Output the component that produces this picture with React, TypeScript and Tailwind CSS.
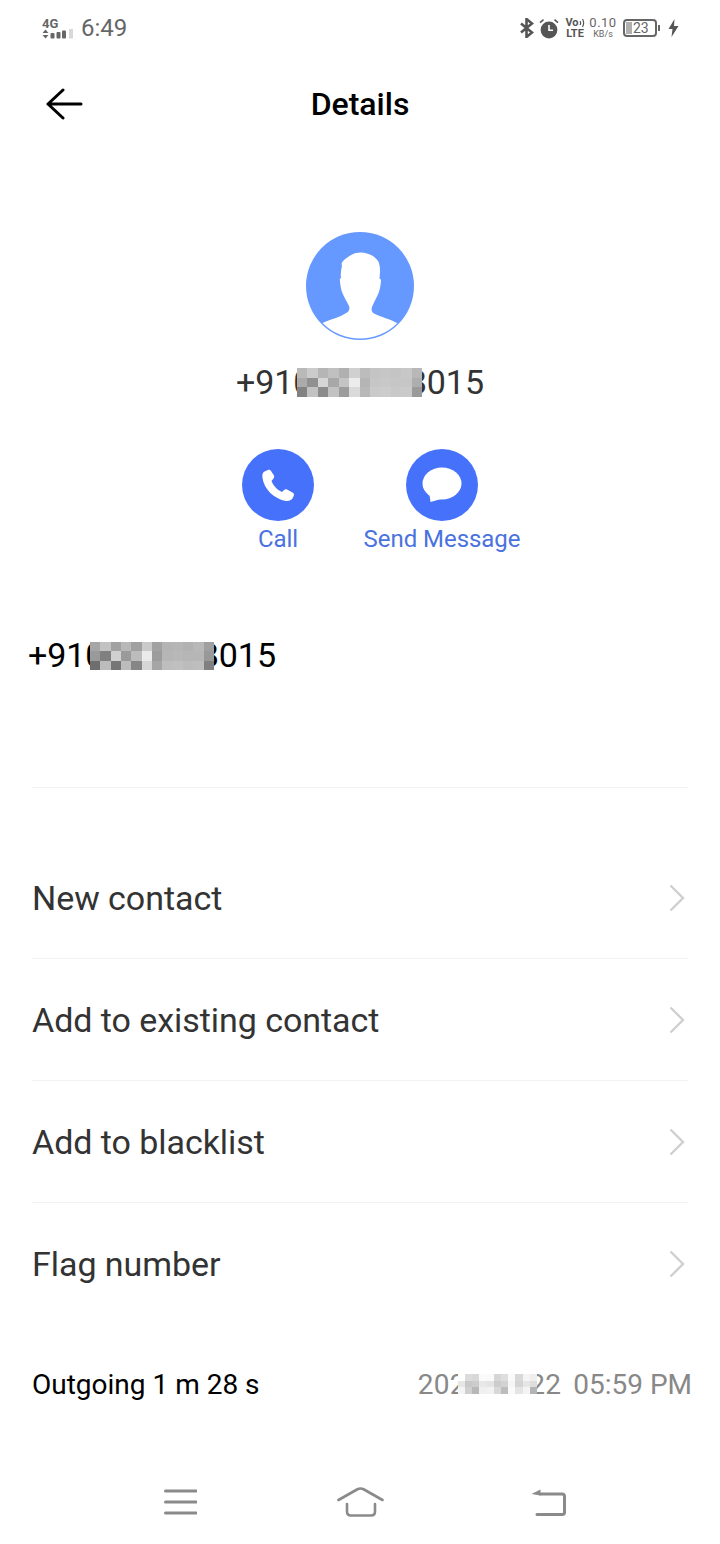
import React from 'react';

const firstMosaic = [
  ['#b9b9b9', '#cbcbcb', '#b5b5b5', '#c0c0c0', '#b0b0b0', '#d0d0d0', '#bcbcbc', '#c4c4c4', '#c6c6c6', '#c4c4c4', '#c8c8c8', '#b8b8b8'],
  ['#ababab', '#909090', '#d6d6d6', '#a8a8a8', '#c4c4c4', '#ececec', '#b5b5b5', '#c6c6c6', '#c8c8c8', '#c6c6c6', '#c6c6c6', '#aeaeae'],
  ['#828282', '#c2c2c2', '#8c8c8c', '#c2c2c2', '#9c9c9c', '#dadada', '#b8b8b8', '#cacaca', '#cccccc', '#c8c8c8', '#cacaca', '#9a9a9a'],
];

const secondMosaic = [
  ['#a6a6a6', '#c2c2c2', '#a2a2a2', '#b8b8b8', '#a0a0a0', '#cacaca', '#a2a2a2', '#b4b4b4', '#b6b6b6', '#b2b2b2', '#b8b8b8', '#a0a0a0'],
  ['#9a9a9a', '#808080', '#d0d0d0', '#9a9a9a', '#bcbcbc', '#eaeaea', '#9c9c9c', '#b6b6b6', '#b8b8b8', '#b6b6b6', '#b6b6b6', '#989898'],
  ['#6e6e6e', '#bcbcbc', '#767676', '#bcbcbc', '#868686', '#d6d6d6', '#a6a6a6', '#bebebe', '#c0c0c0', '#bcbcbc', '#bebebe', '#808080'],
];

const dateMosaic = [
  ['#ffffff', '#dcdcdc', '#d8d8d8', '#fafafa', '#fafafa', '#d6d6d6', '#dedede', '#fafafa', '#d8d8d8', '#f4f4f4', '#eeeeee'],
  ['#e6e6e6', '#c8c8c8', '#cccccc', '#e8e8e8', '#e4e4e4', '#cccccc', '#d2d2d2', '#f6f6f6', '#d4d4d4', '#e6e6e6', '#dedede'],
  ['#f4f4f4', '#cfcfcf', '#b8b8b8', '#f0f0f0', '#f2f2f2', '#d8d8d8', '#bcbcbc', '#fafafa', '#e4e4e4', '#f4f4f4', '#b4b4b4'],
];

const Mosaic = ({ rows, className }: { rows: string[][]; className: string }) => (
  <div className={`absolute flex flex-col ${className}`}>
    {rows.map((row, i) => (
      <div key={i} className="flex flex-1">
        {row.map((color, j) => (
          <div key={j} className="flex-1" style={{ backgroundColor: color }} />
        ))}
      </div>
    ))}
  </div>
);

const Chevron = () => (
  <svg width="16" height="28" viewBox="0 0 16 28" fill="none" stroke="#cfcfcf" strokeWidth="2.4">
    <path d="M1.5 1.5L14 14L1.5 26.5" />
  </svg>
);

const MenuRow = ({ label, divider }: { label: string; divider?: boolean }) => (
  <div className={`h-[122px] flex items-center justify-between pr-[3px] ${divider ? 'border-b border-[#f2f2f2]' : ''}`}>
    <span className="text-[34px] tracking-[-0.05px] text-[#333333] leading-none">{label}</span>
    <Chevron />
  </div>
);

const StatusBar = () => (
  <div className="h-[56px] shrink-0 flex items-center justify-between pl-[42px] pr-[41px] text-[#666666]">
    <div className="flex items-center gap-[7px]">
      <div className="flex flex-col w-[32px] h-[22px] relative top-[1px]">
        <span className="text-[13px] font-bold leading-[12px] h-[11px]">4G</span>
        <svg width="32" height="10" viewBox="0 0 32 10" fill="#666666">
          <path d="M0.5 4L3.5 0.5L6.5 4Z" />
          <path d="M0.5 6L6.5 6L3.5 9.5Z" />
          <rect x="8.5" y="4" width="4" height="5.5" rx="1" />
          <rect x="14.5" y="3" width="4" height="6.5" rx="1" />
          <rect x="20" y="1.5" width="4" height="8" rx="1" />
          <rect x="27" y="0" width="4" height="9.5" fill="#d8d8d8" />
        </svg>
      </div>
      <span className="text-[24px] leading-none">6:49</span>
    </div>
    <div className="flex items-center">
      <svg width="14" height="20" viewBox="0 0 14 20" fill="none" stroke="#555555" strokeWidth="2.6">
        <path d="M1 5.5L12 14.5L6.5 19V1L12 5.5L1 14.5" />
      </svg>
      <svg className="ml-[5px]" width="20" height="21" viewBox="0 0 20 21" fill="#555555">
        <circle cx="10" cy="12" r="8.4" />
        <path d="M9.2 7V13H14V11.4H10.8V7Z" fill="#ffffff" />
        <path d="M0.5 4L4 1L5 2.2L1.6 5.2Z" />
        <path d="M19.5 4L16 1L15 2.2L18.4 5.2Z" />
      </svg>
      <div className="ml-[7px] w-[18px] flex flex-col items-center font-bold text-[#555555]">
        <span className="flex items-center h-[11px]">
          <span className="text-[11px] leading-[11px]">Vo</span>
          <svg width="6" height="10" viewBox="0 0 6 10" fill="none" stroke="#555555" strokeWidth="1.2">
            <path d="M1 3C2 4.5 2 5.5 1 7M3.5 1C5.2 4 5.2 6 3.5 9" />
          </svg>
        </span>
        <span className="text-[11px] leading-[11px] h-[11px]">LTE</span>
      </div>
      <div className="ml-[6px] w-[26px] flex flex-col items-center">
        <span className="text-[13px] leading-[12px] tracking-[0.5px]">0.10</span>
        <span className="text-[9px] leading-[11px]">KB/s</span>
      </div>
      <div className="ml-[7px] flex items-center">
        <div className="w-[34px] h-[18px] border-2 border-[#666666] rounded-[4px] flex items-center px-[1px]">
          <div className="w-[6px] h-[12px] bg-[#b0b0b0]" />
          <span className="ml-[1px] text-[14px] leading-none">23</span>
        </div>
        <div className="w-[2px] h-[6px] bg-[#666666] ml-[1px]" />
      </div>
      <svg className="ml-[8px]" width="11" height="18" viewBox="0 0 11 18" fill="#555555">
        <path d="M6.5 0L0.5 10H4.5L3.5 18L10.5 7H6L6.5 0Z" />
      </svg>
    </div>
  </div>
);

const Avatar = () => (
  <svg width="108" height="108" viewBox="0 0 108 108">
    <defs>
      <clipPath id="avatarClip">
        <circle cx="54" cy="54" r="52.6" />
      </clipPath>
    </defs>
    <circle cx="54" cy="54" r="54" fill="#6699ff" />
    <path
      clipPath="url(#avatarClip)"
      fill="#ffffff"
      d="M55 20.5C50 20.5 46 22 42 25C39 27 36.5 29 35.5 31.5C36 33 36 35 35.5 36C35 39 34.5 42 35 46L33.8 47C34 52 35 57 36 60C38 65 41 70 43 74C44 77 43 79 41 80.5C33 86 24 87 15.5 91.5L10 108H98L92 91.5C84 87 75 85 68 81.5C66 80 65 78 66 75C68 70 71 65 73 60C74 56 75 52 75 47.5L73.5 46.5C74 41 74.5 36 73 31C71 25 62 20.5 55 20.5Z"
    />
  </svg>
);

const PhoneIcon = () => (
  <svg width="72" height="72" viewBox="0 0 72 72">
    <circle cx="36" cy="36" r="36" fill="#4672fb" />
    <path
      fill="#ffffff"
      d="M26 21L22.5 22.5C20.5 23.5 20 26 20.5 29C22 40 32 50 44 52C47 52.5 50 51 51 48.5L52 46C52 45 51.5 44 50.5 43.5L45 40.5C44 40 43 40.2 42 41L40 43C35 41 31 36 29.5 32L31.5 29.5C32.3 28.5 32.3 27.5 32 26.5L29 22C28.5 21 27 20.6 26 21Z"
    />
  </svg>
);

const BubbleIcon = () => (
  <svg width="72" height="72" viewBox="0 0 72 72" fill="#ffffff">
    <circle cx="36" cy="36" r="36" fill="#4672fb" />
    <ellipse cx="36" cy="34.5" rx="19.5" ry="16" />
    <path d="M23 42L24.5 53L35 50Z" />
  </svg>
);

const NavBar = () => (
  <div className="flex items-center pl-[164px] mt-[82px]">
    <svg width="33" height="26" viewBox="0 0 33 26" fill="none" stroke="#8a8a8a" strokeWidth="3" strokeLinecap="round">
      <path d="M1.5 2H32M1.5 13H32M1.5 24H32" />
    </svg>
    <svg className="ml-[140px]" width="47" height="30" viewBox="0 0 47 30" fill="none" stroke="#8a8a8a" strokeWidth="2.6" strokeLinecap="round">
      <path d="M1.5 13L20 2.5C22 1.4 25 1.4 27 2.5L45.5 13" />
      <path d="M10 17V24.5C10 27 11.5 28.5 14 28.5H34C36.5 28.5 38 27 38 24.5V17" />
    </svg>
    <svg className="ml-[147px]" width="35" height="28" viewBox="0 0 35 28" fill="none" stroke="#8a8a8a" strokeWidth="3" strokeLinecap="round">
      <path d="M9 6H31C32.5 6 33.5 7 33.5 8.5V24.5C33.5 26 32.5 26.5 31 26.5H6" />
      <path d="M0.5 6L9.5 1.5V7.5Z" fill="#8a8a8a" stroke="none" />
    </svg>
  </div>
);

export default function App() {
  return (
    <div className="w-[720px] h-[1544px] bg-white overflow-hidden flex flex-col font-['Roboto',sans-serif]">
      <StatusBar />

      <div className="h-[96px] shrink-0 grid grid-cols-[1fr_auto_1fr] items-center">
        <div className="pl-[46px]">
          <svg width="37" height="32" viewBox="0 0 37 32" fill="none" stroke="#000000" strokeWidth="3" strokeLinecap="round" strokeLinejoin="round">
            <path d="M2 16H35M17 2L2 16L17 30" />
          </svg>
        </div>
        <span className="text-[32px] font-medium text-black leading-none">Details</span>
        <div />
      </div>

      <div className="flex flex-col items-center pt-[80px]">
        <Avatar />
        <div className="relative mt-[22px] text-[34px] tracking-[-0.05px] leading-[40px] text-[#333333]">
          +910000008015
          <Mosaic rows={firstMosaic} className="left-[61px] top-[6px] w-[125px] h-[29px]" />
        </div>
      </div>

      <div className="flex justify-center items-start mt-[47px]">
        <div className="flex flex-col items-center w-[72px]">
          <PhoneIcon />
          <span className="mt-[4px] text-[24px] tracking-[-0.05px] leading-[28px] text-[#4a72e0]">Call</span>
        </div>
        <div className="flex flex-col items-center w-[72px] ml-[92px]">
          <BubbleIcon />
          <span className="mt-[4px] text-[24px] tracking-[-0.05px] leading-[28px] text-[#4a72e0] whitespace-nowrap">Send Message</span>
        </div>
      </div>

      <div className="relative self-start ml-[28px] mt-[82px] text-[34px] tracking-[-0.05px] leading-[40px] text-black">
        +910000008015
        <Mosaic rows={secondMosaic} className="left-[62px] top-[7px] w-[124px] h-[28px]" />
      </div>

      <div className="mx-[32px] mt-[112px] border-t border-[#f2f2f2]" />

      <div className="mx-[32px] mt-[49px]">
        <MenuRow label="New contact" divider />
        <MenuRow label="Add to existing contact" divider />
        <MenuRow label="Add to blacklist" divider />
        <MenuRow label="Flag number" />
      </div>

      <div className="flex items-center justify-between pl-[32px] pr-[28px] mt-[40px] h-[40px]">
        <span className="text-[28px] text-black leading-none">Outgoing 1 m 28 s</span>
        <div className="flex items-center text-[28px] text-[#888888] leading-none">
          <span className="relative tracking-[0.2px]">
            2020-00-22
            <Mosaic rows={dateMosaic} className="left-[40px] top-[3px] w-[79px] h-[20px]" />
          </span>
          <span className="ml-[12px]">05:59 PM</span>
        </div>
      </div>

      <NavBar />
    </div>
  );
}
